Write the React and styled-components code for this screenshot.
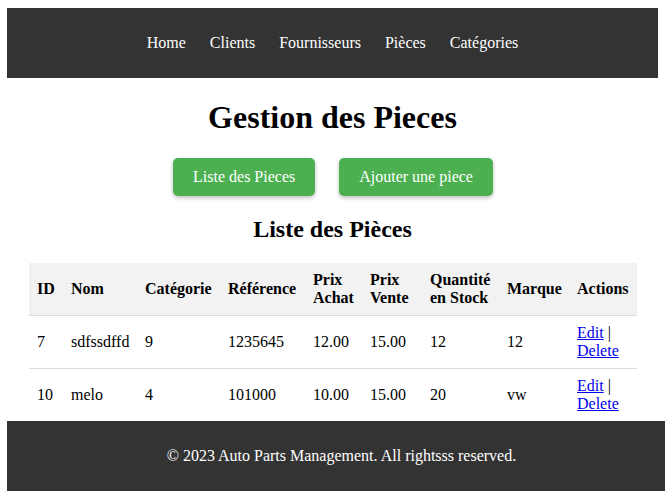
import React from "react";
import styled, { createGlobalStyle } from "styled-components";

const GlobalStyle = createGlobalStyle`
  body {
    margin: 8px 7px;
    font-family: "Liberation Serif", "Times New Roman", serif;
    font-size: 16px;
    color: #000;
    background: #fff;
  }
`;

const Header = styled.header`
  background: #333;
  padding: 26px 0;
`;

const Nav = styled.nav`
  display: flex;
  justify-content: center;
  gap: 24px;
`;

const NavLink = styled.a`
  color: #fff;
  text-decoration: none;
  font-size: 16px;
  line-height: 18px;
`;

const Main = styled.main`
  text-align: center;
`;

const Title = styled.h1`
  font-size: 32px;
  margin: 21.44px 0;
`;

const ButtonRow = styled.div`
  display: flex;
  justify-content: center;
  gap: 24px;
  padding-left: 1px;
`;

const ActionButton = styled.a`
  display: inline-block;
  background: #4caf50;
  color: #fff;
  text-decoration: none;
  padding: 10px 20px;
  line-height: 18px;
  border-radius: 5px;
  box-shadow: 0 2px 4px rgba(0, 0, 0, 0.25);
  font-size: 16px;
`;

const SubTitle = styled.h2`
  font-size: 24px;
  margin: 19.92px 0;
`;

const TableWrap = styled.div`
  padding: 0 21px 0 22px;
`;

const Table = styled.table`
  width: 100%;
  border-collapse: collapse;
  table-layout: fixed;
  text-align: left;
`;

const Col = styled.col`
  width: ${(p) => p.$w}px;
`;

const Th = styled.th`
  background: #f2f2f2;
  padding: 8px;
  border-bottom: 1px solid #ddd;
  line-height: 18px;
  font-weight: bold;
`;

const Td = styled.td`
  padding: 8px;
  border-bottom: 1px solid #ddd;
  line-height: 18px;
`;

const Link = styled.a`
  color: #0000ee;
  text-decoration: underline;
`;

const Footer = styled.footer`
  position: fixed;
  bottom: 0;
  width: 100%;
  background: #333;
  color: #fff;
  text-align: center;
  padding: 26px 0 26px 2px;
  line-height: 18px;
`;

const columns = [
  { label: "ID", w: 34 },
  { label: "Nom", w: 74 },
  { label: "Catégorie", w: 83 },
  { label: "Référence", w: 85 },
  { label: "Prix Achat", w: 57 },
  { label: "Prix Vente", w: 60 },
  { label: "Quantité en Stock", w: 77 },
  { label: "Marque", w: 70 },
  { label: "Actions", w: 68 },
];

const rows = [
  { id: 7, nom: "sdfssdffd", cat: "9", ref: "1235645", achat: "12.00", vente: "15.00", qty: "12", marque: "12" },
  { id: 10, nom: "melo", cat: "4", ref: "101000", achat: "10.00", vente: "15.00", qty: "20", marque: "vw" },
];

export default function App() {
  return (
    <>
      <GlobalStyle />
      <Header>
        <Nav>
          <NavLink href="#">Home</NavLink>
          <NavLink href="#">Clients</NavLink>
          <NavLink href="#">Fournisseurs</NavLink>
          <NavLink href="#">Pièces</NavLink>
          <NavLink href="#">Catégories</NavLink>
        </Nav>
      </Header>
      <Main>
        <Title>Gestion des Pieces</Title>
        <ButtonRow>
          <ActionButton href="#">Liste des Pieces</ActionButton>
          <ActionButton href="#">Ajouter une piece</ActionButton>
        </ButtonRow>
        <SubTitle>Liste des Pièces</SubTitle>
        <TableWrap>
          <Table>
            <colgroup>
              {columns.map((c) => (
                <Col key={c.label} $w={c.w} />
              ))}
            </colgroup>
            <thead>
              <tr>
                {columns.map((c) => (
                  <Th key={c.label}>{c.label}</Th>
                ))}
              </tr>
            </thead>
            <tbody>
              {rows.map((r) => (
                <tr key={r.id}>
                  <Td>{r.id}</Td>
                  <Td>{r.nom}</Td>
                  <Td>{r.cat}</Td>
                  <Td>{r.ref}</Td>
                  <Td>{r.achat}</Td>
                  <Td>{r.vente}</Td>
                  <Td>{r.qty}</Td>
                  <Td>{r.marque}</Td>
                  <Td>
                    <Link href="#">Edit</Link> | <Link href="#">Delete</Link>
                  </Td>
                </tr>
              ))}
            </tbody>
          </Table>
        </TableWrap>
      </Main>
      <Footer>© 2023 Auto Parts Management. All rightsss reserved.</Footer>
    </>
  );
}
